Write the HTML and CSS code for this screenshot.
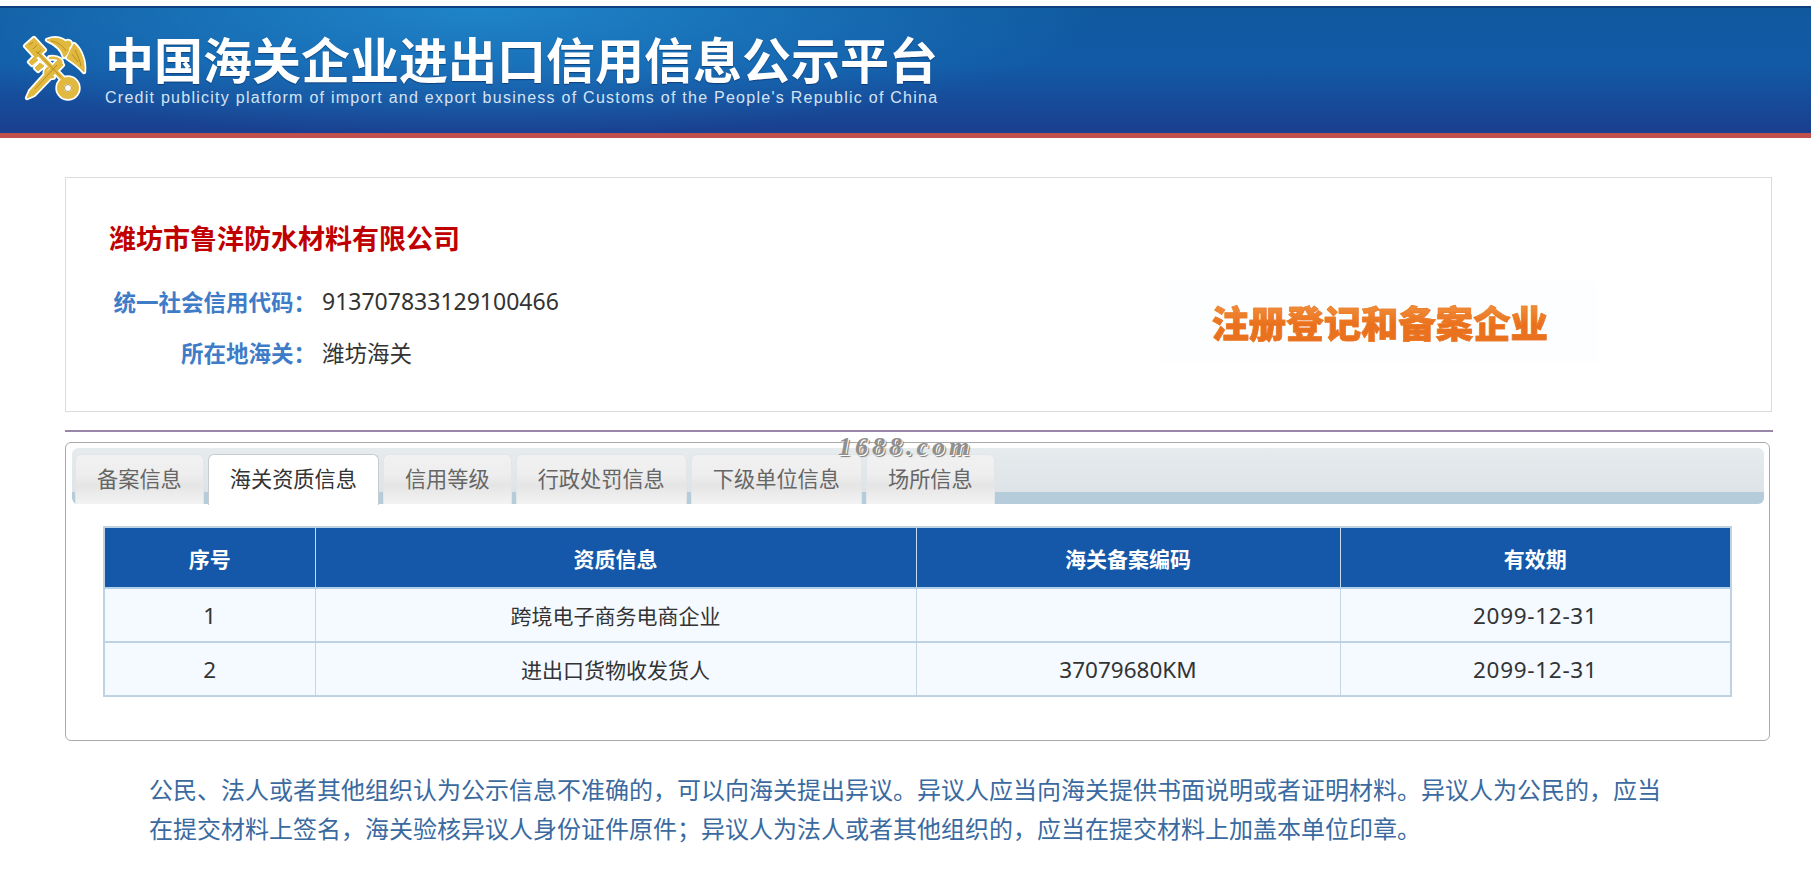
FILE: index.html
```html
<!DOCTYPE html>
<html lang="zh-CN">
<head>
<meta charset="utf-8">
<title>中国海关企业进出口信用信息公示平台</title>
<link rel="stylesheet" href="styles.css">
</head>
<body>
<header class="site-header">
  <div class="banner">
    <svg class="emblem" viewBox="0 0 64 64" aria-hidden="true">
      <defs>
        <g id="mark">
          <path class="m-fill" d="M4 62 L7 55 L35 24 L40 29 L11 59 Z"/>
          <path class="m-fill" d="M41 21 C39 13 33 8 24 4 C33 0 43 3 46 11 C46 15 44 19 41 21Z"/>
          <path class="m-fill" d="M44 22 C47 16 49 11 51 8 C58 14 62 25 61 36 C56 30 50 26 44 22Z"/>
          <circle class="m-fill" cx="45" cy="8" r="3"/>
          <path class="m-line m-thin" d="M27 22 C35 21 41 25 37 30 C33 35 27 33 23 38"/>
          <path class="m-line m-thin" d="M25 32 C20 36 23 41 30 41"/>
          <path class="m-line" d="M8 10 L40 43"/>
          <path class="m-fill" d="M2 10 L11 2 L22 14 L13 22Z"/>
          <path class="m-fill" d="M11 21 L6 26 L9 29 L15 24Z"/>
          <path class="m-fill" d="M17 27 L12 32 L15 35 L21 30Z"/>
          <circle class="m-ring" cx="45" cy="52" r="7.500"/>
        </g>
      </defs>
      <use href="#mark" class="m-halo"/>
      <use href="#mark" class="m-gold"/>
      <path class="m-detail" d="M6 9 L10 6 M10 13 L14 9 M14 18 L18 14 M13 15 L38 41 M28 5 C35 6 40 10 43 15 M52 14 C55 20 57 25 58 30 M49 18 C51 21 53 23 55 26 M12 53 L34 29"/>
      <circle class="m-hole" cx="45" cy="52" r="3.500"/>
    </svg>
    <div class="banner-text">
      <h1 class="banner-title">中国海关企业进出口信用信息公示平台</h1>
      <p class="banner-sub">Credit publicity platform of import and export business of Customs of the People's Republic of China</p>
    </div>
  </div>
</header>

<main class="page">
  <section class="card">
    <div class="company">
      <h2 class="company-name">潍坊市鲁洋防水材料有限公司</h2>
      <dl class="facts">
        <dt>统一社会信用代码：</dt><dd class="num">913707833129100466</dd>
        <dt>所在地海关：</dt><dd>潍坊海关</dd>
      </dl>
    </div>
    <div class="status"><span class="status-text">注册登记和备案企业</span></div>
  </section>

  <hr class="rule">

  <section class="panel">
    <span class="watermark">1688.com</span>
    <nav class="tabs">
      <a class="tab">备案信息</a>
      <a class="tab tab-active">海关资质信息</a>
      <a class="tab">信用等级</a>
      <a class="tab">行政处罚信息</a>
      <a class="tab">下级单位信息</a>
      <a class="tab">场所信息</a>
    </nav>
    <table class="grid">
      <colgroup>
        <col class="c1"><col class="c2"><col class="c3"><col class="c4">
      </colgroup>
      <thead>
        <tr><th>序号</th><th>资质信息</th><th>海关备案编码</th><th>有效期</th></tr>
      </thead>
      <tbody>
        <tr><td class="num">1</td><td>跨境电子商务电商企业</td><td></td><td class="num date">2099-12-31</td></tr>
        <tr><td class="num">2</td><td>进出口货物收发货人</td><td class="num">37079680KM</td><td class="num date">2099-12-31</td></tr>
      </tbody>
    </table>
  </section>

  <p class="notice">公民、法人或者其他组织认为公示信息不准确的，可以向海关提出异议。异议人应当向海关提供书面说明或者证明材料。异议人为公民的，应当<br>在提交材料上签名，海关验核异议人身份证件原件；异议人为法人或者其他组织的，应当在提交材料上加盖本单位印章。</p>
</main>
</body>
</html>
```
FILE: styles.css
```css
* { box-sizing: border-box; }
html, body { margin: 0; padding: 0; background: #fff; }
body {
  font-family: "Noto Sans CJK SC", "Noto Sans", sans-serif;
  color: #333;
  overflow: hidden;
  height: 887px;
}

/* header */
.site-header {
  height: 139px;
  padding-top: 6px;
}
.banner {
  height: 132px;
  border-top: 2px solid #0e3f7e;
  border-bottom: 5px solid #c0504d;
  display: flex;
  align-items: flex-start;
  padding: 28px 0 0 23px;
  background:
    radial-gradient(ellipse 620px 130px at 480px 0, rgba(34, 140, 208, .85), rgba(34, 140, 208, 0) 100%),
    linear-gradient(180deg, #10599f 0%, #125aa6 45%, #1a3f8f 100%);
}
.emblem { width: 64px; height: 64px; flex: none; overflow: visible; margin-right: 18px; }
.m-halo { --c: #fff; --h: 3.4px; }
.m-gold { --c: #e2b93f; --h: 0px; }
.m-line { fill: none; stroke: var(--c); stroke-width: calc(4px + var(--h)); stroke-linecap: round; stroke-linejoin: round; }
.m-thin { stroke-width: calc(2.6px + var(--h)); }
.m-fill { fill: var(--c); stroke: var(--c); stroke-width: calc(1px + var(--h)); stroke-linejoin: round; }
.m-ring { fill: none; stroke: var(--c); stroke-width: calc(7px + var(--h)); }
.m-detail { fill: none; stroke: #a97d18; stroke-width: 1; opacity: .75; }
.m-hole { fill: #fff; stroke: #a97d18; stroke-width: .8; }
.banner-text { display: flex; flex-direction: column; }
.banner-title {
  margin: 0;
  font-family: "Liberation Sans", "Noto Sans CJK SC", sans-serif;
  font-size: 49px;
  line-height: 52px;
  font-weight: 700;
  color: #fff;
  white-space: nowrap;
  text-shadow: 0 1px 1px rgba(10, 40, 90, .6);
}
.banner-sub {
  margin: 0;
  font-family: "Liberation Sans", Arial, sans-serif;
  font-size: 16px;
  line-height: 19px;
  letter-spacing: 1.260px;
  color: #d5e4f3;
  white-space: nowrap;
}

/* page */
.page { width: 1708px; margin-left: 65px; }

.card {
  margin-top: 38px;
  height: 235px;
  border: 1px solid #dcdcdc;
  display: flex;
  justify-content: space-between;
  width: 1707px;
}
.company { padding: 41px 0 0 43px; }
.company-name {
  margin: 0;
  font-size: 27px;
  line-height: 38px;
  font-weight: 700;
  color: #c00000;
}
.facts {
  margin: 18px 0 0 4px;
  display: grid;
  grid-template-columns: 203px auto;
  column-gap: 6px;
  grid-auto-rows: 51px;
  align-items: center;
  font-size: 22.500px;
}
.facts dt { font-weight: 700; color: #3f7cc8; text-align: right; white-space: nowrap; }
.facts dd { margin: 0; color: #333; }
.num { font-family: "Noto Sans", "Noto Sans CJK SC", sans-serif; }
.facts .num { font-size: 23px; }

.status {
  align-self: flex-end;
  margin: 0 173px 48px 0;
  padding: 16px 50px;
  background: #fdfeff;
}
.status-text {
  display: block;
  font-size: 37.400px;
  line-height: 50px;
  font-weight: 900;
  white-space: nowrap;
  color: #e8701c;
  background: linear-gradient(180deg, #f39c4a 0%, #ea701c 55%, #e9721f 100%);
  -webkit-background-clip: text;
  background-clip: text;
  -webkit-text-fill-color: transparent;
  -webkit-text-stroke: .6px #ec7a26;
}

.rule {
  margin: 18px 0 0;
  border: 0;
  height: 2px;
  background: #9a86a8;
}

.panel {
  position: relative;
  margin-top: 10px;
  width: 1705px;
  height: 299px;
  border: 1px solid #aaa;
  border-radius: 6px;
  padding: 5px 5px 0 6px;
}
.watermark {
  position: absolute;
  left: 772px;
  top: -11px;
  font-family: "Liberation Serif", serif;
  font-style: italic;
  font-weight: 700;
  font-size: 26px;
  line-height: 30px;
  letter-spacing: 4px;
  color: #8f8f8f;
  text-shadow: 1px 1px 0 #fff, 2px 2px 1px #777;
  z-index: 2;
}
.tabs {
  height: 56px;
  display: flex;
  align-items: flex-end;
  gap: 4px;
  padding-left: 3px;
  border-radius: 6px;
  background: linear-gradient(180deg, #e6ebee 0, #dde3e6 44px, #b5ccda 44px, #b5ccda 56px);
}
.tab {
  height: 50px;
  padding: 0 21px;
  font-size: 21.200px;
  line-height: 46px;
  color: #666;
  white-space: nowrap;
  border: 1px solid #e2e6e8;
  border-bottom: 0;
  border-radius: 6px 6px 0 0;
  background: linear-gradient(180deg, #f1f1f1 0, #eeeeee 40%, #e5e5e5 62%, #f3f3f3 100%);
}
.tab-active {
  position: relative;
  height: 51px;
  margin-bottom: -1px;
  color: #333;
  background: #fff;
  border-color: #c6ccd0;
}

.grid {
  width: 1627px;
  margin: 22px 0 0 31px;
  border-collapse: collapse;
  table-layout: fixed;
  border: 2px solid #bfd2e2;
  font-size: 21px;
}
.c1 { width: 211px; }
.c2 { width: 601px; }
.c3 { width: 424px; }
.c4 { width: 391px; }
.grid th {
  height: 61px;
  background: #1557a8;
  color: #fff;
  font-weight: 700;
  font-size: 21px;
  border: 1px solid #c7dcef;
  border-top-color: #8fbbe6;
  border-bottom: 2px solid #b3d0ea;
  padding: 0;
}
.grid td {
  height: 54px;
  background: #f4faff;
  text-align: center;
  color: #333;
  border-left: 1px solid #c4d5e3;
  border-right: 1px solid #c4d5e3;
  border-bottom: 2px solid #bfd2e2;
  padding: 0;
}
.grid .num { font-size: 22.500px; }
.grid .date { letter-spacing: .7px; }

.notice {
  margin: 28px 0 0 84px;
  font-size: 24px;
  line-height: 39px;
  color: #3a6a9f;
  white-space: nowrap;
}
```
